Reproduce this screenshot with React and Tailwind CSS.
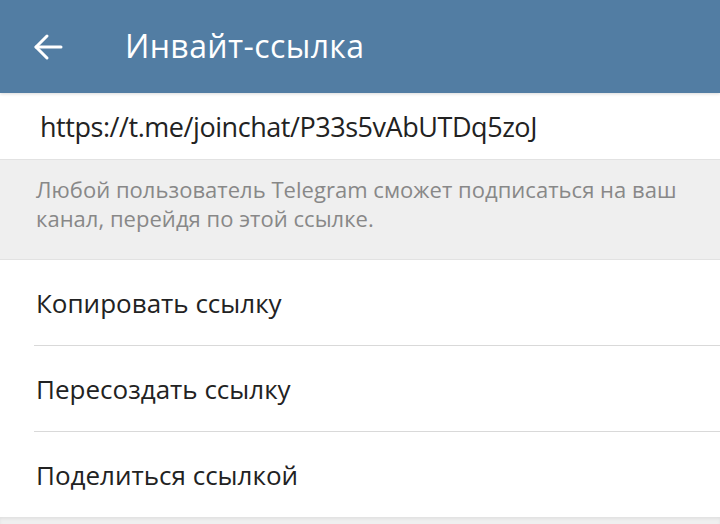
export default function App() {
  const font = { fontFamily: '"Open Sans", "Noto Sans", sans-serif' };
  return (
    <div className="w-[720px] h-[524px] bg-[#efefef] flex flex-col overflow-hidden" style={font}>
      <div className="h-[93px] bg-[#527da3] flex items-center shrink-0 relative z-10 shadow-[0_1px_3px_rgba(0,0,0,0.15)]">
        <div className="w-[125px] pl-[33px] flex items-center">
          <svg width="30" height="28" viewBox="0 0 30 28" fill="none" stroke="white" strokeWidth="3" strokeLinecap="round" strokeLinejoin="round">
            <path d="M28 14H3" />
            <path d="M14 3L3 14L14 25" />
          </svg>
        </div>
        <span className="text-white text-[32px] tracking-[0.4px] leading-none pb-[2px]">Инвайт-ссылка</span>
      </div>
      <div className="h-[66px] bg-white flex items-center pl-[40px] shrink-0">
        <span className="text-[#222] text-[27px] tracking-[-0.45px] leading-none">https://t.me/joinchat/P33s5vAbUTDq5zoJ</span>
      </div>
      <div className="h-[100px] bg-[#efefef] border-t border-[#e2e2e2] pl-[36px] pt-[15px] shrink-0">
        <p className="text-[#888] text-[22px] leading-[29px] tracking-[0.03px]">
          Любой пользователь Telegram сможет подписаться на ваш канал, перейдя по этой ссылке.
        </p>
      </div>
      <div className="bg-white flex flex-col shrink-0 border-t border-[#e2e2e2]">
        {["Копировать ссылку", "Пересоздать ссылку", "Поделиться ссылкой"].map((t, i) => (
          <div key={t} className="flex flex-col">
            {i > 0 && <div className="ml-[34px] h-px bg-[#d9d9d9]" />}
            <div className="h-[85px] flex items-center pl-[36px]">
              <span className="text-[#222] text-[26px] leading-none">{t}</span>
            </div>
          </div>
        ))}
      </div>
      <div className="flex-1 bg-[#efefef] shadow-[inset_0_2px_3px_rgba(0,0,0,0.06)]" />
    </div>
  );
}
